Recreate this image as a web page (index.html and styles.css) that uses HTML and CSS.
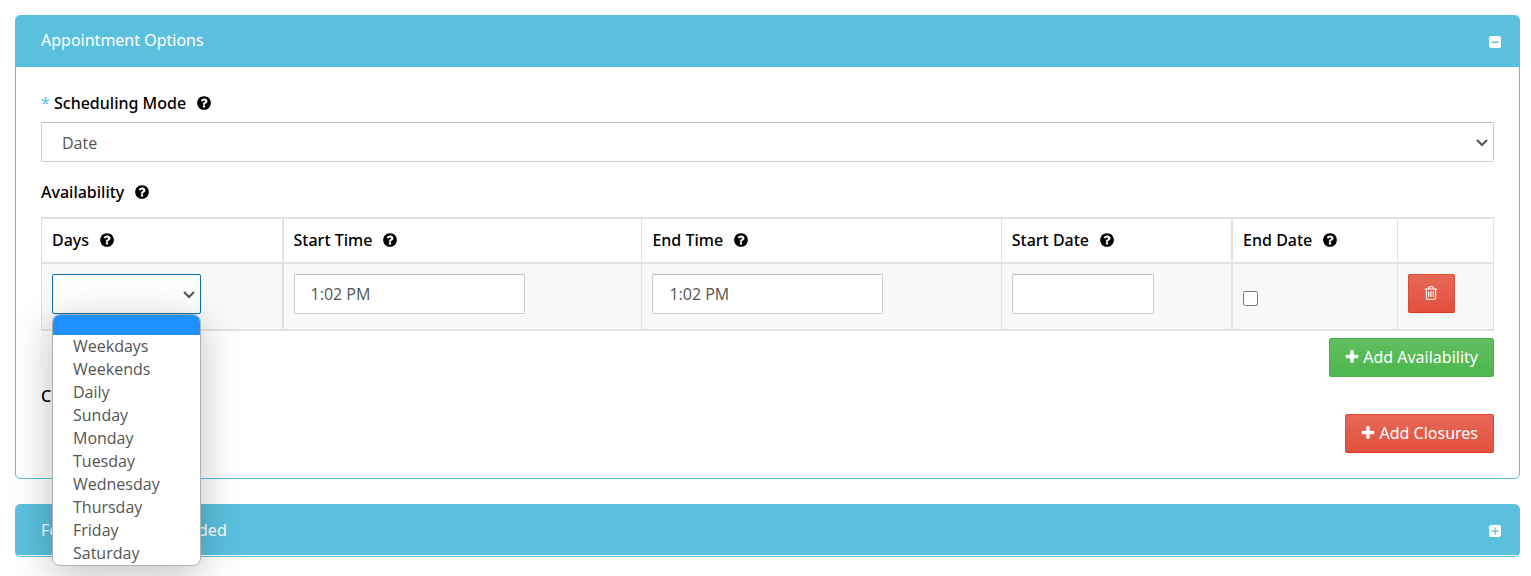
FILE: index.html
```html
<!DOCTYPE html>
<html lang="en">
<head>
<meta charset="utf-8">
<title>Appointment Options</title>
<link rel="stylesheet" href="styles.css">
</head>
<body>
<svg class="sprite" aria-hidden="true">
  <symbol id="help" viewBox="0 0 1792 1792"><path d="M1024 1376v-192q0-14-9-23t-23-9h-192q-14 0-23 9t-9 23v192q0 14 9 23t23 9h192q14 0 23-9t9-23zm256-672q0-88-55.500-163t-138.500-116-170-41q-243 0-371 213-15 24 8 42l132 100q7 6 19 6 16 0 25-12 53-68 86-92 34-24 86-24 48 0 85.500 26t37.500 59q0 38-20 61t-68 45q-63 28-115.500 86.500t-52.500 125.500v36q0 14 9 23t23 9h192q14 0 23-9t9-23q0-19 21.500-49.500t54.500-49.500q32-18 49-28.500t46-35 44.500-48 28-60.500 12.500-81zm384 192q0 209-103 385.500t-279.500 279.500-385.500 103-385.500-103-279.500-279.500-103-385.500 103-385.500 279.500-279.500 385.500-103 385.500 103 279.500 279.500 103 385.500z"/></symbol>
  <symbol id="plus" viewBox="0 0 1792 1792"><path d="M1600 736v192q0 40-28 68t-68 28h-416v416q0 40-28 68t-68 28h-192q-40 0-68-28t-28-68v-416h-416q-40 0-68-28t-28-68v-192q0-40 28-68t68-28h416v-416q0-40 28-68t68-28h192q40 0 68 28t28 68v416h416q40 0 68 28t28 68z"/></symbol>
  <symbol id="trash" viewBox="0 0 1792 1792"><path d="M704 736v576q0 14-9 23t-23 9h-64q-14 0-23-9t-9-23v-576q0-14 9-23t23-9h64q14 0 23 9t9 23zm256 0v576q0 14-9 23t-23 9h-64q-14 0-23-9t-9-23v-576q0-14 9-23t23-9h64q14 0 23 9t9 23zm256 0v576q0 14-9 23t-23 9h-64q-14 0-23-9t-9-23v-576q0-14 9-23t23-9h64q14 0 23 9t9 23zm128 724v-948h-896v948q0 22 7 40.500t14.500 27 10.500 8.500h832q3 0 10.500-8.500t14.500-27 7-40.500zm-672-1076h448l-48-117q-7-9-17-11h-317q-10 2-17 11zm928 32v64q0 14-9 23t-23 9h-96v948q0 83-47 143.500t-113 60.500h-832q-66 0-113-58.500t-47-141.500v-952h-96q-14 0-23-9t-9-23v-64q0-14 9-23t23-9h309l70-167q15-37 54-63t79-26h320q40 0 79 26t54 63l70 167h309q14 0 23 9t9 23z"/></symbol>
  <symbol id="chevron" viewBox="0 0 12 8"><path d="M1 1l5 5 5-5" fill="none" stroke="#555" stroke-width="2"/></symbol>
  <symbol id="collapse" viewBox="0 0 12 12"><path fill-rule="evenodd" d="M2 0h8a2 2 0 0 1 2 2v8a2 2 0 0 1-2 2H2a2 2 0 0 1-2-2V2a2 2 0 0 1 2-2zM2.500 5.500v1.500h7V5.500z"/></symbol>
  <symbol id="expand" viewBox="0 0 12 12"><path fill-rule="evenodd" d="M2 0h8a2 2 0 0 1 2 2v8a2 2 0 0 1-2 2H2a2 2 0 0 1-2-2V2a2 2 0 0 1 2-2zM2.500 5.500v1.200h3v3h1.200v-3h3V5.500h-3v-3H5.500v3z"/></symbol>
</svg>

<section class="panel">
  <header class="panel-heading">
    <h2 class="panel-title">Appointment Options</h2>
    <button class="toggle" type="button" aria-label="Collapse"><svg class="toggle-icon"><use href="#collapse"/></svg></button>
  </header>
  <div class="panel-body">
    <div class="label-row">
      <label for="mode"><span class="required">*</span> Scheduling Mode</label>
      <svg class="icon"><use href="#help"/></svg>
    </div>
    <div class="select-field mode-field">
      <select id="mode" class="control select"><option>Date</option></select>
      <svg class="chevron"><use href="#chevron"/></svg>
    </div>

    <div class="label-row availability-label">
      <span>Availability</span>
      <svg class="icon"><use href="#help"/></svg>
    </div>
    <table class="grid">
      <colgroup>
        <col class="col-days"><col class="col-time"><col class="col-time"><col class="col-start"><col class="col-end"><col>
      </colgroup>
      <thead>
        <tr>
          <th class="wide-rule"><div class="label-row"><label for="days">Days</label><svg class="icon"><use href="#help"/></svg></div></th>
          <th><div class="label-row"><label for="start-time">Start Time</label><svg class="icon"><use href="#help"/></svg></div></th>
          <th><div class="label-row"><label for="end-time">End Time</label><svg class="icon"><use href="#help"/></svg></div></th>
          <th class="wide-rule"><div class="label-row"><label for="start-date">Start Date</label><svg class="icon"><use href="#help"/></svg></div></th>
          <th><div class="label-row"><label for="end-date">End Date</label><svg class="icon"><use href="#help"/></svg></div></th>
          <th></th>
        </tr>
      </thead>
      <tbody>
        <tr>
          <td class="wide-rule">
            <div class="select-field days-field">
              <select id="days" class="control select open"><option></option></select>
              <svg class="chevron"><use href="#chevron"/></svg>
              <ul class="menu" role="listbox" aria-label="Days">
                <li class="menu-item selected" role="option" aria-selected="true"></li>
                <li class="menu-item" role="option">Weekdays</li>
                <li class="menu-item" role="option">Weekends</li>
                <li class="menu-item" role="option">Daily</li>
                <li class="menu-item" role="option">Sunday</li>
                <li class="menu-item" role="option">Monday</li>
                <li class="menu-item" role="option">Tuesday</li>
                <li class="menu-item" role="option">Wednesday</li>
                <li class="menu-item" role="option">Thursday</li>
                <li class="menu-item" role="option">Friday</li>
                <li class="menu-item" role="option">Saturday</li>
              </ul>
            </div>
          </td>
          <td><input id="start-time" class="control time" type="text" value="1:02 PM"></td>
          <td><input id="end-time" class="control time" type="text" value="1:02 PM"></td>
          <td class="wide-rule"><input id="start-date" class="control date" type="text"></td>
          <td><input id="end-date" class="check" type="checkbox"></td>
          <td><button class="btn btn-red" type="button" aria-label="Delete"><svg class="icon"><use href="#trash"/></svg></button></td>
        </tr>
      </tbody>
    </table>
    <div class="actions">
      <button class="btn btn-green" type="button"><svg class="icon"><use href="#plus"/></svg>Add Availability</button>
    </div>
    <div class="label-row closures-label">
      <span>Closures</span>
      <svg class="icon"><use href="#help"/></svg>
    </div>
    <div class="actions">
      <button class="btn btn-red" type="button"><svg class="icon"><use href="#plus"/></svg>Add Closures</button>
    </div>
  </div>
</section>

<section class="panel collapsed">
  <header class="panel-heading">
    <h2 class="panel-title">Form Fields Also Needed</h2>
    <button class="toggle" type="button" aria-label="Expand"><svg class="toggle-icon"><use href="#expand"/></svg></button>
  </header>
</section>
</body>
</html>
```
FILE: styles.css
```css
* { box-sizing: border-box; }

body {
  margin: 0;
  padding: 15px 11px 0 15px;
  background: #fff;
  color: #000;
  font: 16px/24px "Open Sans", "Noto Sans", sans-serif;
}

.sprite { display: none; }

.panel {
  margin-bottom: 25px;
  border: 1px solid #5bc0de;
  border-radius: 5px;
}

.panel-heading {
  display: flex;
  align-items: center;
  justify-content: space-between;
  height: 51px;
  padding: 0 18px 3px 25px;
  border-radius: 3px 3px 0 0;
  background: #5bc0de;
  color: #fff;
}

.collapsed .panel-heading {
  height: 50px;
  margin-bottom: 1px;
  padding-bottom: 1px;
}

.panel-title {
  margin: 0;
  font-family: "Noto Sans", sans-serif;
  font-size: 16px;
  font-weight: 400;
}

.toggle {
  display: flex;
  padding: 3px 0 0;
  border: 0;
  background: none;
  color: inherit;
}

.toggle-icon {
  width: 12px;
  height: 12px;
  fill: currentColor;
}

.panel-body { padding: 24px 25px 25px; }

.label-row {
  display: flex;
  align-items: center;
  gap: 10px;
  font-family: "Noto Sans", sans-serif;
  font-weight: 500;
}

.required {
  color: #5bc0de;
  font-weight: 400;
}

.icon {
  flex: none;
  width: 16px;
  height: 16px;
  fill: currentColor;
}

.control {
  display: block;
  height: 40px;
  padding: 0 16px;
  border: 1px solid #ccc;
  border-top-color: #bbb;
  border-radius: 2px;
  background-color: #fff;
  color: #555;
  font: inherit;
  font-weight: 400;
}

.select-field { position: relative; }
.mode-field { margin-top: 7px; }
.days-field { width: 149px; }

.select {
  width: 100%;
  padding: 1px 24px 0 20px;
  appearance: none;
}

.select.open { border-color: #0b6fb0; }

.chevron {
  position: absolute;
  top: 17px;
  right: 6px;
  width: 12px;
  height: 8px;
  pointer-events: none;
}

.availability-label { margin: 18px 0 13px; }

.grid {
  width: 100%;
  border-collapse: collapse;
  table-layout: fixed;
}

.col-days { width: 16.6%; }
.col-time { width: 24.75%; }
.col-start { width: 15.9%; }
.col-end { width: 11.4%; }

.grid th,
.grid td {
  padding: 10px;
  border: 1px solid #e2e2e2;
  border-width: 2px 1px;
  text-align: left;
  vertical-align: top;
}

.grid th { padding-top: 9px; }

.grid th.wide-rule,
.grid td.wide-rule { border-right-width: 2px; }

.grid tbody td {
  height: 67px;
  background: #f9f9f9;
}

.time { width: 231px; }
.date { width: 142px; }

.check {
  display: block;
  width: 15px;
  height: 15px;
  margin: 17px 0 0;
}

.menu {
  position: absolute;
  top: 100%;
  left: 0;
  z-index: 1;
  width: 149px;
  margin: 0;
  padding: 0;
  overflow: hidden;
  list-style: none;
  border: 1px solid #b0b0b0;
  border-radius: 8px;
  background: #fff;
  box-shadow: 0 8px 40px rgba(0, 0, 0, 0.25);
  color: #555;
}

.menu-item {
  height: 23px;
  padding-left: 20px;
  line-height: 23px;
}

.menu-item.selected {
  height: 20px;
  background: #1e90ff;
}

.actions {
  display: flex;
  justify-content: flex-end;
}

.grid + .actions { margin-top: 7px; }

.closures-label { margin: 7px 0 6px; }

.btn {
  display: flex;
  align-items: center;
  gap: 3px;
  height: 39px;
  padding: 0 15px 1px 14px;
  border: 1px solid;
  border-radius: 2px;
  color: #fff;
  font: inherit;
  font-family: "Noto Sans", sans-serif;
}

.btn-green {
  border-color: #4cae4c;
  background: linear-gradient(#62bf62, #4cb64c);
}

.btn-red {
  border-color: #df4b38 #df4b38 #dc3522;
  background: linear-gradient(#e66857, #e3503e);
}
```
